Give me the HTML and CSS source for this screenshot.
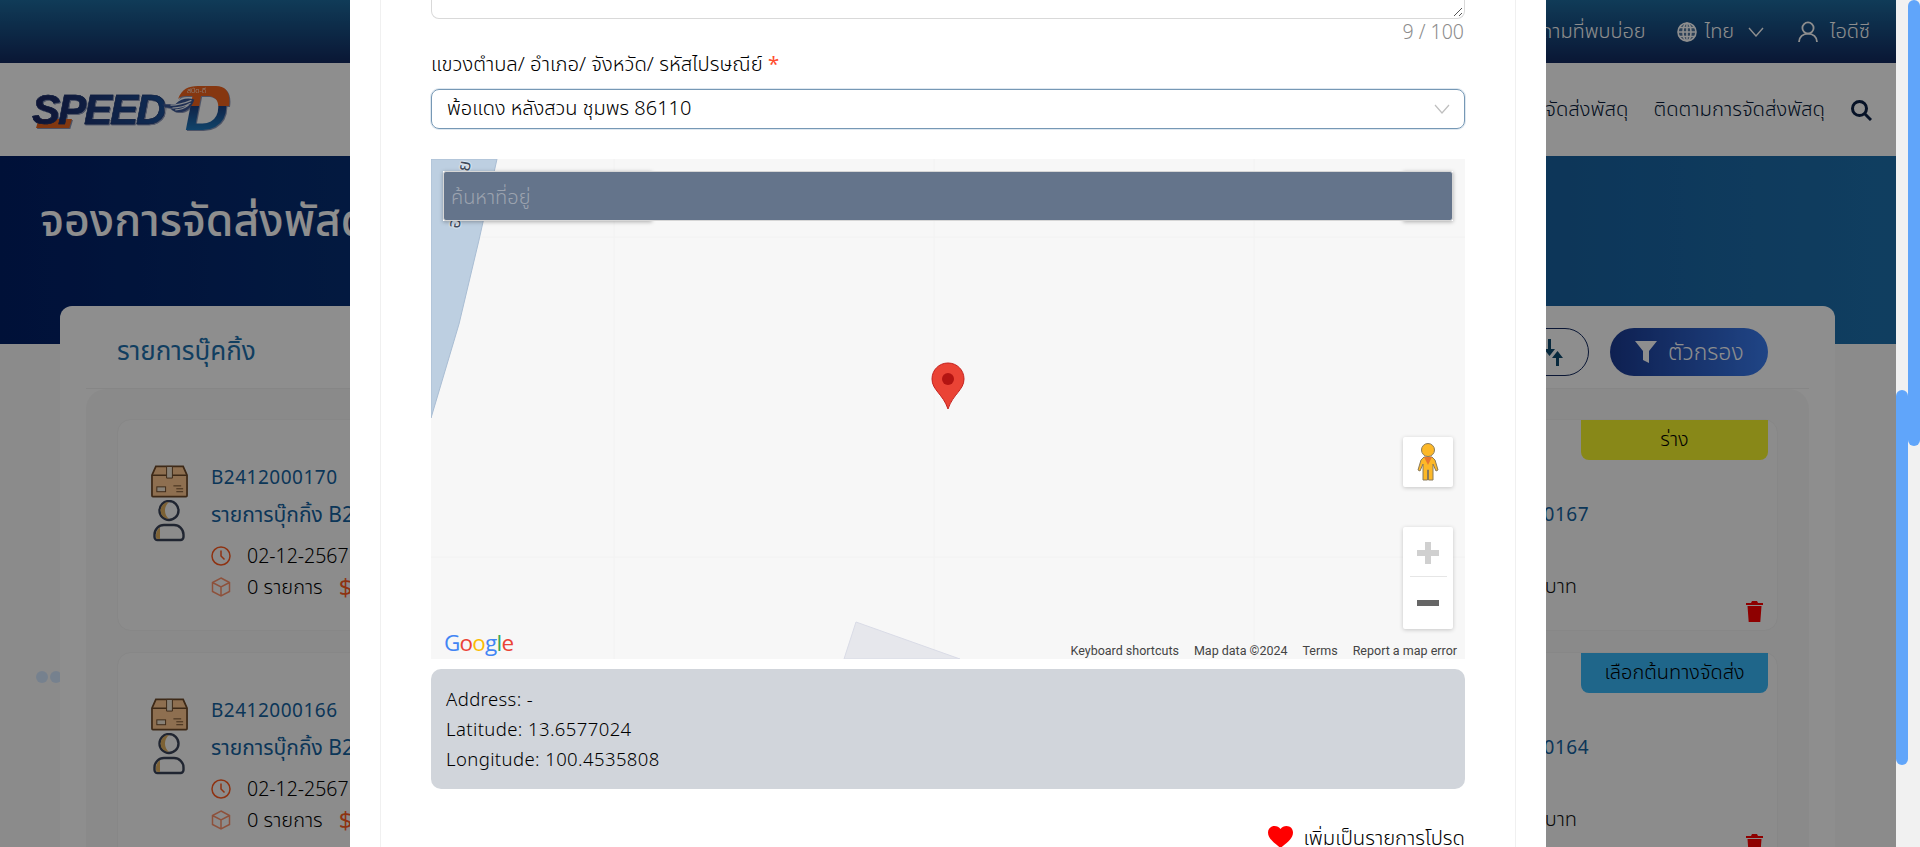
FILE: index.html
```html
<!DOCTYPE html>
<html lang="th">
<head>
    <meta charset="UTF-8">
    <title>จองการจัดส่งพัสดุ</title>
    <link rel="stylesheet" href="styles.css">
</head>
<body>
    <div class="screen">
        <div class="page">
            <header class="topbar">
                <span class="top-link">คำถามที่พบบ่อย</span>
                <span class="top-link lang">
                    <svg class="ico20" viewBox="0 0 20 20" fill="none" stroke="currentColor" stroke-width="1.6"><circle cx="10" cy="10" r="9" fill="currentColor" fill-opacity=".25"/><ellipse cx="10" cy="10" rx="4" ry="9"/><path d="M1 10h18M2.500 5.500h15M2.500 14.500h15M10 1v18"/></svg>
                    ไทย
                    <svg class="chev lang-chev" viewBox="0 0 16 10" fill="none" stroke="currentColor" stroke-width="1.4"><path d="M1 1l7 8 7-8"/></svg>
                </span>
                <span class="top-link user">
                    <svg class="ico22" viewBox="0 0 22 22" fill="none" stroke="currentColor" stroke-width="1.8"><circle cx="11" cy="7" r="5.6"/><path d="M2 21c0-5 4-8.400 9-8.400s9 3.400 9 8.400"/></svg>
                    ไอดีซี
                </span>
            </header>
            <nav class="navbar">
                <div class="logo">
                    <svg class="logo-swoosh" viewBox="0 0 40 10"><path d="M3 0h37l-3 10H0z" fill="#e8641e"/></svg>
                    <span class="logo-word">SPEED</span>
                    <svg class="logo-wing" viewBox="0 0 34 20"><path d="M0 7h14C20 1 27 0 34 2c-2 8-9 15-20 13l-5-3h5L3 10z" fill="#3a5796"/><path d="M9 8c8 0 15-2 22-5M11 11c8 0 14-2 19-5M14 13c6 0 10-2 14-5" stroke="#f2f6fc" stroke-width="1.200" fill="none"/></svg>
                    <span class="logo-d">D</span>
                    <svg class="logo-top" viewBox="0 0 52 20"><path d="M0 13C4 3 10 0 20 0h18c10 0 15 7 13 20H41c2-7-2-10-8-10H8c-4 0-6 1-8 3z" fill="#f0641e"/></svg>
                    <span class="logo-arc">สปีด-ดี</span>
                </div>
                <div class="nav-links">
                    <span>จองการจัดส่งพัสดุ</span>
                    <span>ติดตามการจัดส่งพัสดุ</span>
                    <svg class="ico22 nav-search" viewBox="0 0 22 22" fill="none" stroke="currentColor" stroke-width="3"><circle cx="9.500" cy="9.500" r="7"/><path d="M15 15l6 6"/></svg>
                </div>
            </nav>
            <section class="hero">
                <h1>จองการจัดส่งพัสดุ</h1>
            </section>
            <div class="dots"><i></i><i></i></div>
            <main class="list-card">
                <div class="list-head">
                    <h2>รายการบุ๊คกิ้ง</h2>
                    <div class="list-actions">
                        <button class="btn-sort">
                            <svg class="sort-ico" viewBox="0 0 20 27" fill="#0f4a6e"><path d="M5 0h3v10h4l-5.500 7L1 10h4zM14.500 12l5.500 7h-4v8h-3v-8H9z"/></svg>
                        </button>
                        <button class="btn-filter">
                            <svg class="ico22" viewBox="0 0 22 22" fill="currentColor"><path d="M0 0h22l-8 10v12l-6-3v-9z"/></svg>
                            ตัวกรอง
                        </button>
                    </div>
                </div>
                <div class="list-panel">
                    <article class="booking">
                        <span class="badge badge-draft">ร่าง</span>
                        <div class="booking-left">
                            <div class="booking-icons">
                                <svg class="box-ico" viewBox="0 0 38 33"><path d="M5 1h28l4 9v21a1 1 0 0 1-1 1H2a1 1 0 0 1-1-1V10z" fill="#ffc890" stroke="#6e4a2a" stroke-width="1.800"/><path d="M1 10h36" stroke="#6e4a2a" stroke-width="1.500"/><path d="M16 1h6v12h-6z" fill="#f2e6d4" stroke="#6e4a2a"/><rect x="6" y="22" width="9" height="5" fill="#f2e6d4" stroke="#6e4a2a"/><path d="M23 21h8M26 24h7M26 27h7" stroke="#6e4a2a"/></svg>
                                <svg class="person-ico" viewBox="0 0 32 42"><circle cx="16" cy="10.500" r="9.500" fill="#fcfcfc" stroke="#3a4458" stroke-width="2.400"/><path d="M16 2a8.500 8.500 0 0 0 0 17 11 11 0 0 1 0-17z" fill="#e0b060"/><path d="M11 25h10a9.500 9.500 0 0 1 9.500 9.500V37a3 3 0 0 1-3 3h-23a3 3 0 0 1-3-3v-2.500A9.500 9.500 0 0 1 11 25z" fill="#fcfcfc" stroke="#3a4458" stroke-width="2.400"/><path d="M3 37v-2c0-3 1.500-6 4-7.500V39H5a2 2 0 0 1-2-2z" fill="#e0b060"/></svg>
                            </div>
                            <div class="booking-info">
                                <p class="booking-id">B2412000170</p>
                                <p class="booking-title">รายการบุ๊กกิ้ง B2412000170</p>
                                <p class="booking-meta">
                                    <svg class="ico20 meta-ico" viewBox="0 0 20 20" fill="none" stroke="currentColor" stroke-width="1.500"><circle cx="10" cy="10" r="9"/><path d="M10 4.500V10l3.500 3.500"/></svg>
                                    02-12-2567
                                </p>
                                <p class="booking-meta meta-items">
                                    <svg class="ico20 meta-ico pale" viewBox="0 0 20 20" fill="none" stroke="currentColor" stroke-width="1.500"><path d="M10 1l8.500 4.500v9L10 19l-8.500-4.500v-9zM1.500 5.500L10 10l8.500-4.500M10 10v9"/></svg>
                                    <span>0 รายการ</span> <b class="dollar">$</b>
                                </p>
                            </div>
                        </div>
                        <div class="booking-right">
                            <p class="booking-id">B2412000167</p>
                            <p class="booking-price">0 บาท</p>
                        </div>
                        <svg class="trash" viewBox="0 0 17 21" fill="currentColor"><path d="M6 0h5l1 2h5v2H0V2h5zM1.500 5h14l-1.200 16H2.700z"/></svg>
                    </article>
                    <article class="booking">
                        <span class="badge badge-origin">เลือกต้นทางจัดส่ง</span>
                        <div class="booking-left">
                            <div class="booking-icons">
                                <svg class="box-ico" viewBox="0 0 38 33"><path d="M5 1h28l4 9v21a1 1 0 0 1-1 1H2a1 1 0 0 1-1-1V10z" fill="#ffc890" stroke="#6e4a2a" stroke-width="1.800"/><path d="M1 10h36" stroke="#6e4a2a" stroke-width="1.500"/><path d="M16 1h6v12h-6z" fill="#f2e6d4" stroke="#6e4a2a"/><rect x="6" y="22" width="9" height="5" fill="#f2e6d4" stroke="#6e4a2a"/><path d="M23 21h8M26 24h7M26 27h7" stroke="#6e4a2a"/></svg>
                                <svg class="person-ico" viewBox="0 0 32 42"><circle cx="16" cy="10.500" r="9.500" fill="#fcfcfc" stroke="#3a4458" stroke-width="2.400"/><path d="M16 2a8.500 8.500 0 0 0 0 17 11 11 0 0 1 0-17z" fill="#e0b060"/><path d="M11 25h10a9.500 9.500 0 0 1 9.500 9.500V37a3 3 0 0 1-3 3h-23a3 3 0 0 1-3-3v-2.500A9.500 9.500 0 0 1 11 25z" fill="#fcfcfc" stroke="#3a4458" stroke-width="2.400"/><path d="M3 37v-2c0-3 1.500-6 4-7.500V39H5a2 2 0 0 1-2-2z" fill="#e0b060"/></svg>
                            </div>
                            <div class="booking-info">
                                <p class="booking-id">B2412000166</p>
                                <p class="booking-title">รายการบุ๊กกิ้ง B2412000166</p>
                                <p class="booking-meta">
                                    <svg class="ico20 meta-ico" viewBox="0 0 20 20" fill="none" stroke="currentColor" stroke-width="1.500"><circle cx="10" cy="10" r="9"/><path d="M10 4.500V10l3.500 3.500"/></svg>
                                    02-12-2567
                                </p>
                                <p class="booking-meta meta-items">
                                    <svg class="ico20 meta-ico pale" viewBox="0 0 20 20" fill="none" stroke="currentColor" stroke-width="1.500"><path d="M10 1l8.500 4.500v9L10 19l-8.500-4.500v-9zM1.500 5.500L10 10l8.500-4.500M10 10v9"/></svg>
                                    <span>0 รายการ</span> <b class="dollar">$</b>
                                </p>
                            </div>
                        </div>
                        <div class="booking-right">
                            <p class="booking-id">B2412000164</p>
                            <p class="booking-price">0 บาท</p>
                        </div>
                        <svg class="trash" viewBox="0 0 17 21" fill="currentColor"><path d="M6 0h5l1 2h5v2H0V2h5zM1.500 5h14l-1.200 16H2.700z"/></svg>
                    </article>
                </div>
            </main>
        </div>

        <div class="overlay"></div>

        <div class="modal">
            <div class="modal-card">
                <div class="textarea">
                    <svg class="resize" viewBox="0 0 10 10" stroke="#555" stroke-width="1"><path d="M1 9l8-8M6 9l3-3"/></svg>
                </div>
                <p class="counter">9 / 100</p>
                <label class="field-label">แขวงตำบล/ อำเภอ/ จังหวัด/ รหัสไปรษณีย์ <em>*</em></label>
                <div class="select">
                    <span>พ้อแดง หลังสวน ชุมพร 86110</span>
                    <svg class="chev" viewBox="0 0 16 10" fill="none" stroke="#bfbfbf" stroke-width="1.200"><path d="M1 1l7 8 7-8"/></svg>
                </div>
                <div class="map">
                    <svg class="map-base" viewBox="0 0 1034 500" width="1034" height="500">
                        <path d="M183 0v500M503 0v500M823 0v500M0 78h1034M0 398h1034" stroke="#f2f2f2" stroke-width="1"/>
                        <path d="M0 0h66l-18 81-20 84L0 259z" fill="#bdcfe1" stroke="#a9bdd3"/>
                        <path d="M425 463l104 37H413z" fill="#e6e7ec" stroke="#d9dbe6"/>
                        <path d="M517 204c-9 0-16 7-16 16 0 11 11 15 16 30 5-15 16-19 16-30 0-9-7-16-16-16z" fill="#ea4335" stroke="#c5221f"/>
                        <circle cx="517" cy="220" r="6" fill="#b31412"/>
                    </svg>
                    <span class="water-name">อ่าวไทย</span>
                    <div class="ctl-shadow ctl-type"></div>
                    <div class="ctl-shadow ctl-full"></div>
                    <input class="map-search" type="text" placeholder="ค้นหาที่อยู่">
                    <div class="pegman">
                        <svg viewBox="0 0 22 38" width="22" height="38"><circle cx="11" cy="7" r="6.500" fill="#fdb827" stroke="#8a7a5a"/><path d="M7 14h8l3 3 3 10-2 1-3-7v16h-4.500V27h-1v10H6V21l-3 7-2-1 3-10z" fill="#fdb827" stroke="#8a7a5a"/><path d="M7 14h8l-4 8z" fill="#e8772e"/></svg>
                    </div>
                    <div class="zoom-ctl">
                        <span class="zoom-in"></span>
                        <span class="zoom-sep"></span>
                        <span class="zoom-out"></span>
                    </div>
                    <span class="gmap-logo"><b class="g-b">G</b><b class="g-r">o</b><b class="g-y">o</b><b class="g-b">g</b><b class="g-g">l</b><b class="g-r">e</b></span>
                    <div class="attrib">
                        <span>Keyboard shortcuts</span>
                        <span>Map data ©2024</span>
                        <span>Terms</span>
                        <span>Report a map error</span>
                    </div>
                </div>
                <div class="address">
                    <p>Address: -</p>
                    <p>Latitude: 13.6577024</p>
                    <p>Longitude: 100.4535808</p>
                </div>
                <div class="favourite">
                    <svg class="heart" viewBox="0 0 25 22" fill="#ff0000"><path d="M12.500 22C5 16 0 12 0 6.500 0 2.800 2.800 0 6.500 0c2.400 0 4.700 1.200 6 3 1.300-1.800 3.600-3 6-3C22.200 0 25 2.800 25 6.500 25 12 20 16 12.500 22z"/></svg>
                    <span>เพิ่มเป็นรายการโปรด</span>
                </div>
            </div>
        </div>
    </div>

    <div class="scrollbars">
        <div class="track"><div class="thumb thumb-inner"></div></div>
        <div class="track"><div class="thumb thumb-outer"></div></div>
    </div>
</body>
</html>
```

FILE: styles.css
```css
* {
    box-sizing: border-box;
}
html, body {
    margin: 0;
    height: 847px;
    overflow: hidden;
}
body {
    display: flex;
    font-family: 'Noto Sans', 'Noto Sans Thai', 'Noto Sans CJK SC', sans-serif;
    font-size: 16px;
    font-weight: 300;
    color: #000;
}
p {
    margin: 0;
}

.screen {
    position: relative;
    width: 1896px;
    height: 847px;
    overflow: hidden;
}

/* page behind the modal */
.page {
    position: relative;
    height: 847px;
    overflow: hidden;
    background: #f9f9f9;
}
.topbar {
    height: 63px;
    background: linear-gradient(180deg, #1d6b9e 0%, #12295f 100%);
    color: #fff;
    display: flex;
    align-items: center;
    justify-content: flex-end;
    padding-right: 26px;
    font-size: 20px;
}
.top-link {
    display: flex;
    align-items: center;
}
.lang {
    margin-left: 31px;
    gap: 8px;
}
.lang-chev {
    margin-left: 6px;
}
.user {
    margin-left: 33px;
    gap: 11px;
}
.navbar {
    height: 93px;
    background: #fff;
    display: flex;
    align-items: center;
    justify-content: space-between;
    padding: 0 24px 0 32px;
    color: #071a3a;
    font-size: 20.300px;
}
.nav-links {
    display: flex;
    align-items: center;
    gap: 25px;
}
.nav-search {
    color: #0b2146;
}
.logo {
    position: relative;
    display: flex;
    align-items: center;
    height: 44px;
    width: 200px;
    filter: drop-shadow(1px 1px 0 #8a96b8);
}
.logo-swoosh {
    position: absolute;
    left: 2px;
    top: 31px;
    width: 40px;
    height: 9px;
}
.logo-word {
    position: relative;
    font: italic 700 42px/44px 'Liberation Sans', sans-serif;
    letter-spacing: -2px;
    background: linear-gradient(90deg, #1c2560 0%, #1c4f96 100%);
    -webkit-background-clip: text;
    background-clip: text;
    color: transparent;
    -webkit-text-stroke: .5px #1c3570;
}
.logo-wing {
    position: relative;
    width: 34px;
    height: 20px;
    margin-left: -2px;
    margin-top: -6px;
}
.logo-d {
    font: italic 700 60px/44px 'Liberation Sans', sans-serif;
    background: linear-gradient(180deg, #f0641e 0%, #f0641e 40%, #1c3f80 40%, #1f7fc4 100%);
    -webkit-background-clip: text;
    background-clip: text;
    color: transparent;
    margin-left: -10px;
    padding-right: 4px;
}
.logo-top {
    position: absolute;
    left: 146px;
    top: -2px;
    width: 52px;
    height: 20px;
}
.logo-arc {
    position: absolute;
    left: 155px;
    top: -2px;
    line-height: 10px;
    color: #fff;
    font-size: 7px;
}
.hero {
    height: 188px;
    background: linear-gradient(90deg, #011f66 0%, #1d70ad 100%);
    padding: 31px 40px;
}
.hero h1 {
    margin: 0;
    color: #fff;
    font-size: 44.500px;
    font-weight: 500;
    line-height: 64px;
}
.list-card {
    position: absolute;
    left: 60px;
    top: 306px;
    width: 1775px;
    height: 600px;
    background: #fff;
    border-radius: 12px;
    padding: 0 26px;
}
.list-head {
    height: 83px;
    display: flex;
    align-items: center;
    justify-content: space-between;
    border-bottom: 1px solid #f0f0f0;
    padding: 10px 41px 0 31px;
}
.list-head h2 {
    margin: 0;
    font-size: 26px;
    font-weight: 400;
    color: #1d70ad;
}
.list-actions {
    display: flex;
    gap: 21px;
}
.btn-sort, .btn-filter {
    height: 48px;
    border-radius: 24px;
    font-family: inherit;
    display: flex;
    align-items: center;
}
.btn-sort {
    width: 90px;
    background: #fff;
    border: 1px solid #12295f;
    justify-content: flex-end;
    padding: 0 25px 0 0;
}
.sort-ico {
    width: 20px;
    height: 27px;
}
.btn-filter {
    width: 158px;
    gap: 11px;
    padding: 0 0 0 25px;
    border: none;
    background: linear-gradient(90deg, #1a3a92 0%, #3a7cf0 100%);
    color: #fff;
    font-size: 23px;
    font-weight: 300;
}
.list-panel {
    background: #f8f8f8;
    border-radius: 20px 20px 0 0;
    padding: 30px 31px;
    display: flex;
    flex-direction: column;
    gap: 21px;
}
.booking {
    position: relative;
    height: 212px;
    flex: none;
    background: #fcfcfc;
    border: 1px solid #f2f2f2;
    border-radius: 14px;
    display: flex;
    justify-content: space-between;
    padding: 45px 0 0 33px;
}
.badge {
    position: absolute;
    right: 9px;
    top: 0;
    width: 187px;
    height: 40px;
    border-radius: 0 0 8px 8px;
    display: flex;
    align-items: center;
    justify-content: center;
    color: #000;
    font-size: 20px;
    font-weight: 300;
}
.badge-draft {
    background: #f4f42c;
}
.badge-origin {
    background: #38b7f8;
}
.booking-left {
    display: flex;
    gap: 24px;
}
.booking-icons {
    width: 36px;
    display: flex;
    flex-direction: column;
    align-items: center;
    gap: 2px;
}
.box-ico {
    width: 37px;
    height: 33px;
}
.person-ico {
    width: 32px;
    height: 42px;
}
.booking-id {
    color: #15629f;
    font-size: 19px;
    font-weight: 400;
    line-height: 24px;
    letter-spacing: .5px;
}
.booking-title {
    color: #15629f;
    font-size: 21px;
    font-weight: 400;
    line-height: 30px;
    margin: 10px 0 11px;
}
.booking-meta {
    display: flex;
    align-items: center;
    gap: 16px;
    line-height: 31px;
    font-size: 19.500px;
    color: #000;
}
.meta-items {
    font-size: 20px;
}
.meta-ico {
    color: #ff5a1f;
}
.pale {
    opacity: .65;
}
.dollar {
    color: #ff5a1f;
    font-size: 24px;
}
.booking-right {
    width: 400px;
    padding: 37px 188px 0 0;
    text-align: right;
}
.booking-price {
    margin-top: 46px;
    font-size: 20px;
    line-height: 28px;
    padding-right: 12px;
    color: #111;
}
.trash {
    position: absolute;
    right: 14px;
    bottom: 8px;
    width: 17px;
    height: 21px;
    color: #ff0000;
}
.dots {
    position: absolute;
    left: 36px;
    top: 671px;
    display: flex;
    gap: 2px;
}
.dots i {
    width: 12px;
    height: 12px;
    border-radius: 50%;
    background: #d5e8ff;
}

.overlay {
    position: absolute;
    inset: 0;
    background: rgba(0, 0, 0, 0.445);
}

/* modal */
.modal {
    position: absolute;
    left: 350px;
    top: 0;
    width: 1196px;
    height: 847px;
    background: #fff;
    padding: 0 30px;
    overflow: hidden;
}
.modal-card {
    height: 847px;
    border-left: 1px solid #f0f0f0;
    border-right: 1px solid #f0f0f0;
    padding: 0 50px;
}
.textarea {
    position: relative;
    height: 19px;
    border: 1px solid #d9d9d9;
    border-top: none;
    border-radius: 0 0 8px 8px;
}
.resize {
    position: absolute;
    right: 1px;
    bottom: 1px;
    width: 10px;
    height: 10px;
}
.counter {
    text-align: right;
    color: #8c8c8c;
    font-size: 19.500px;
    line-height: 24px;
    margin-top: 1px;
    padding-right: 1px;
}
.field-label {
    display: block;
    margin-top: 7px;
    line-height: 24px;
    font-size: 20.300px;
}
.field-label em {
    color: #ff4d2f;
    font-style: normal;
    font-weight: 400;
}
.select {
    height: 40px;
    margin-top: 14px;
    border: 1px solid #7698b5;
    border-radius: 8px;
    box-shadow: 0 0 0 1px rgba(127, 163, 194, .25);
    display: flex;
    align-items: center;
    justify-content: space-between;
    padding: 0 14px 0 15px;
    font-size: 20px;
}
.chev {
    width: 16px;
    height: 10px;
}
.map {
    position: relative;
    height: 500px;
    margin-top: 30px;
    background: #f7f7f7;
    overflow: hidden;
}
.map-base {
    display: block;
}
.water-name {
    position: absolute;
    left: 29px;
    top: 34px;
    font-size: 18px;
    font-weight: 400;
    letter-spacing: 3px;
    color: #3c4a5c;
    text-shadow: 0 0 2px #fff, 0 0 2px #fff;
    white-space: nowrap;
    transform: translate(-50%, -50%) rotate(-80deg);
}
.ctl-shadow {
    position: absolute;
    top: 12px;
    height: 50px;
    background: #fff;
    box-shadow: 0 1px 4px rgba(0, 0, 0, .3);
}
.ctl-type {
    left: 12px;
    width: 209px;
}
.ctl-full {
    left: 972px;
    width: 50px;
}
.map-search {
    position: absolute;
    left: 12px;
    top: 12px;
    width: 1010px;
    height: 50px;
    background: #64748b;
    border: 1px solid #d6d6d6;
    border-radius: 3px;
    padding: 0 7px;
    font-family: inherit;
    font-size: 20px;
    font-weight: 300;
}
.map-search::placeholder {
    color: #9ca3af;
    opacity: 1;
}
.pegman, .zoom-ctl {
    position: absolute;
    left: 972px;
    width: 50px;
    background: #fff;
    border-radius: 2px;
    box-shadow: 0 1px 4px rgba(0, 0, 0, .2);
}
.pegman {
    top: 278px;
    height: 50px;
    display: flex;
    align-items: center;
    justify-content: center;
}
.zoom-ctl {
    top: 368px;
    height: 102px;
    display: flex;
    flex-direction: column;
    align-items: center;
    justify-content: center;
}
.zoom-in {
    position: relative;
    display: block;
    width: 22px;
    height: 6px;
    margin-bottom: 20px;
    background: #d0d0d0;
}
.zoom-in::after {
    content: "";
    position: absolute;
    left: 8px;
    top: -8px;
    width: 6px;
    height: 22px;
    background: #d0d0d0;
}
.zoom-sep {
    width: 37px;
    height: 1px;
    background: #e6e6e6;
}
.zoom-out {
    width: 22px;
    height: 6px;
    margin-top: 23px;
    background: #666;
}
.gmap-logo {
    position: absolute;
    left: 13px;
    bottom: 1px;
    font: 400 22.500px 'Open Sans', sans-serif;
    letter-spacing: -.8px;
}
.gmap-logo b {
    font-weight: 400;
}
.g-b { color: #4285f4; }
.g-r { color: #ea4335; }
.g-y { color: #fbbc05; }
.g-g { color: #34a853; }
.attrib {
    position: absolute;
    right: 8px;
    bottom: 0;
    height: 18px;
    display: flex;
    align-items: center;
    gap: 15px;
    font: 12.500px 'Roboto', sans-serif;
    color: #444;
}
.address {
    height: 120px;
    margin-top: 10px;
    background: #d1d5db;
    border-radius: 10px;
    padding: 15px;
    line-height: 30px;
    font-size: 18.500px;
    letter-spacing: .4px;
}
.favourite {
    display: flex;
    align-items: center;
    justify-content: flex-end;
    gap: 10px;
    margin-top: 35px;
    line-height: 26px;
    font-size: 20.300px;
}
.heart {
    width: 25px;
    height: 22px;
}

/* scrollbars at the window edge */
.scrollbars {
    display: flex;
    width: 24px;
    height: 847px;
}
.track {
    flex: 1;
    position: relative;
    background: #f1f1f1;
}
.thumb {
    position: absolute;
    left: 0;
    right: 0;
    background: #60a5fa;
    border-radius: 6px;
}
.thumb-inner {
    top: 390px;
    height: 375px;
}
.thumb-outer {
    top: 0;
    height: 446px;
}

.ico20 {
    width: 20px;
    height: 20px;
    flex: none;
}
.ico22 {
    width: 22px;
    height: 22px;
    flex: none;
}
```
